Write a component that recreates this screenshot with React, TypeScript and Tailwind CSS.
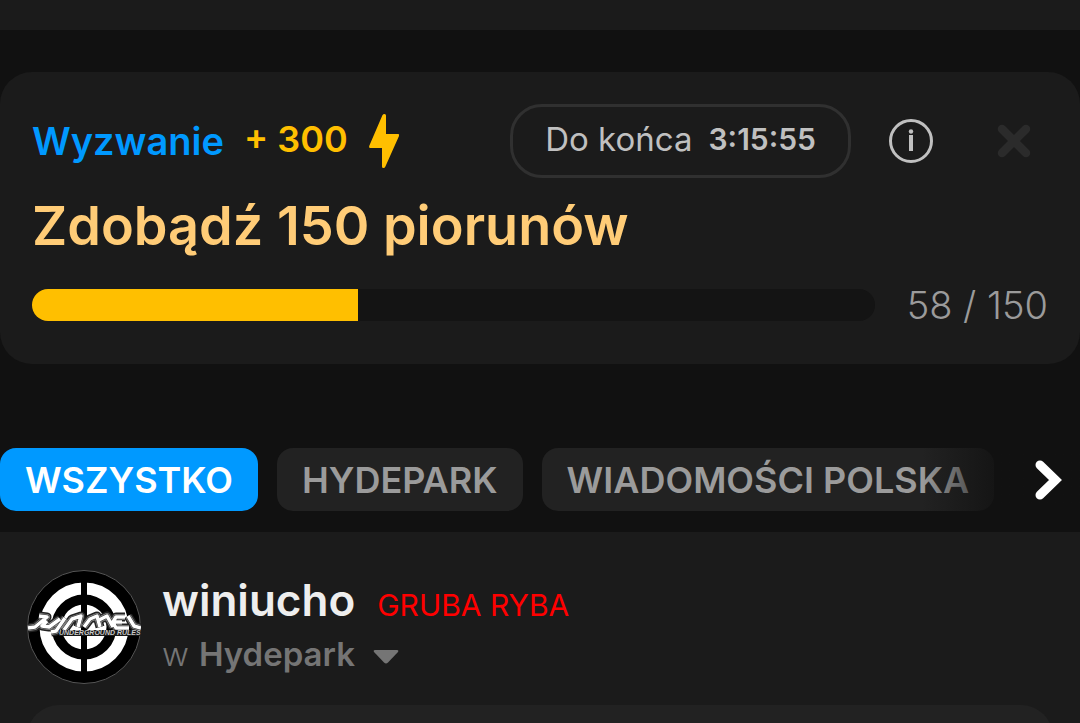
import React from "react";

const tabs = ["WSZYSTKO", "HYDEPARK", "WIADOMOŚCI POLSKA"];
const current = 58;
const goal = 150;

const lettering =
  "M1 58L8 57L20 47L12 46M20 51L15 56L22 57L33 49M24 62L29 61L38 48M37 60L45 49L54 46L51 57M57 57L63 49L70 46L73 57M72 50L80 46L86 57M98 47H89L86 52L95 52M86 52L89 58L102 58M101 46L107 56L114 58";

function Bolt() {
  return (
    <svg viewBox="0 0 32 56" className="h-14 w-8 shrink-0" fill="#ffbf00" aria-hidden="true">
      <path d="M14.4 2.2Q15 1 16.6 1Q18 1 18 2.600V21H30.200Q31.600 21 31 23L17.400 53.500Q16.800 55 15.400 55Q14 55 14 53.400V35H2.200Q.5 35 1.200 33Z" />
    </svg>
  );
}

function InfoIcon() {
  return (
    <svg viewBox="0 0 44 44" className="size-11" fill="none" stroke="#c0c0c0" aria-hidden="true">
      <circle cx="22" cy="22" r="20.500" strokeWidth="3" />
      <path d="M22 16V32" strokeWidth="4" />
      <circle cx="22" cy="12.500" r="2.200" fill="#c0c0c0" stroke="none" />
    </svg>
  );
}

function CloseIcon() {
  return (
    <svg viewBox="0 0 34 34" className="size-[34px]" stroke="#2b2b2b" strokeWidth="8.500" strokeLinecap="round" aria-hidden="true">
      <path d="M5 5L29 29M29 5L5 29" />
    </svg>
  );
}

function Avatar() {
  return (
    <svg viewBox="0 0 114 114" className="size-[114px] shrink-0" role="img" aria-label="winiucho">
      <defs>
        <clipPath id="disc">
          <circle cx="57" cy="57" r="57" />
        </clipPath>
      </defs>
      <circle cx="57" cy="57" r="56.500" fill="#000" stroke="#555" />
      <circle cx="57" cy="57" r="38.500" fill="none" stroke="#fff" strokeWidth="12" />
      <circle cx="57" cy="57" r="22.500" fill="#fff" />
      <path d="M57 8V106" stroke="#000" strokeWidth="6" />
      <g clipPath="url(#disc)" strokeLinejoin="round">
        <g fill="none">
          <path d={lettering} stroke="#222" strokeWidth="9" />
          <path d={lettering} stroke="#8c8c8c" strokeWidth="6" />
          <path d={lettering} stroke="#2a2a2a" strokeWidth="4.500" />
          <path d={lettering} stroke="#fff" strokeWidth="3.500" />
        </g>
        <path d="M32 60H114V66H32Z" fill="#161616" />
        <text x="32" y="65" fill="#c8c8c8" fontSize="7" fontWeight="700" fontStyle="italic" fontFamily="Liberation Sans, sans-serif">
          UNDERGROUND RULES
        </text>
      </g>
    </svg>
  );
}

export default function App() {
  return (
    <div className="flex h-screen flex-col overflow-hidden bg-[#111111] font-['Inter',sans-serif]">
      <header className="mb-[42px] h-[30px] shrink-0 bg-[#1b1b1b]" />

      <section className="shrink-0 rounded-[32px] bg-[#1b1b1b] px-8 pt-8 pb-[39px]">
        <div className="flex items-center">
          <span className="text-[38px] leading-10 font-semibold text-[#0099ff]">Wyzwanie</span>
          <span className="ml-5 pb-1 text-[36px] leading-10 font-semibold whitespace-nowrap text-[#ffbf00]">+ 300</span>
          <span className="ml-5">
            <Bolt />
          </span>
          <div className="ml-auto flex h-[74px] items-center gap-4 rounded-[32px] border-[3px] border-[#303030] px-8 pb-1 text-[33px] leading-10 whitespace-nowrap text-[#c0c0c0]">
            <span>Do końca</span>
            <span className="text-[30px] font-semibold">3:15:55</span>
          </div>
          <button type="button" aria-label="Informacje" className="ml-[38px]">
            <InfoIcon />
          </button>
          <button type="button" aria-label="Zamknij" className="mr-[17px] ml-16">
            <CloseIcon />
          </button>
        </div>
        <h1 className="mt-4 text-[54px] leading-16 font-semibold text-[#ffcc77]">Zdobądź 150 piorunów</h1>
        <div className="mt-[27px] flex items-center gap-8">
          <div
            role="progressbar"
            aria-label="Postęp wyzwania"
            aria-valuenow={current}
            aria-valuemax={goal}
            className="h-8 flex-1 overflow-hidden rounded-full bg-[#141414]"
          >
            <div className="h-full bg-[#ffbf00]" style={{ width: `${(current / goal) * 100}%` }} />
          </div>
          <span className="text-[38px] leading-10 font-light whitespace-nowrap text-[#9b9b9b]">
            {current} / {goal}
          </span>
        </div>
      </section>

      <nav className="relative mt-[84px] shrink-0 overflow-hidden pb-[21px]">
        <div className="flex gap-[19px]">
          {tabs.map((tab, i) => (
            <button
              key={tab}
              type="button"
              className={
                "h-[63px] shrink-0 rounded-2xl px-[25px] text-[36px] leading-10 font-semibold whitespace-nowrap " +
                (i === 0 ? "bg-[#0099ff] text-white" : "bg-[#222222] text-[#9b9b9b]")
              }
            >
              {tab}
            </button>
          ))}
        </div>
        <button
          type="button"
          aria-label="Następne"
          className="absolute top-0 right-0 flex h-[63px] w-[158px] items-center justify-end bg-linear-to-r from-transparent to-[#111111] to-60% pr-4"
        >
          <svg viewBox="0 0 32 44" className="h-11 w-8" fill="none" stroke="#fff" strokeWidth="9" strokeLinecap="round" aria-hidden="true">
            <path d="M8 7L23.500 22L8 37" />
          </svg>
        </button>
      </nav>

      <article className="flex min-h-0 flex-1 flex-col overflow-hidden bg-[#1b1b1b] px-[27px] pt-[38px]">
        <div className="flex shrink-0 items-start gap-[21px]">
          <Avatar />
          <div className="pt-0.5">
            <div className="flex items-baseline gap-[22px]">
              <a href="#winiucho" className="text-[44px] leading-14 font-semibold text-[#eeeeee]">winiucho</a>
              <span className="text-[30px] leading-10 text-[#ff0000]">GRUBA RYBA</span>
            </div>
            <div className="flex items-center pt-0.5 text-[33px] leading-12 text-[#757575]">
              <span className="mr-[10px] font-light">w</span>
              <a href="#hydepark" className="font-semibold">Hydepark</a>
              <button type="button" aria-label="Więcej" className="ml-[18px] pt-1.5">
                <svg viewBox="0 0 26 16" className="h-4 w-[26px]" fill="#757575" aria-hidden="true">
                  <path d="M2 1H24Q26 1 25 3L15 13.500Q13 15.500 11 13.500L1 3Q0 1 2 1Z" />
                </svg>
              </button>
            </div>
          </div>
        </div>
        <div className="mt-[21px] h-24 shrink-0 rounded-[32px] bg-[#222222]" />
      </article>
    </div>
  );
}
